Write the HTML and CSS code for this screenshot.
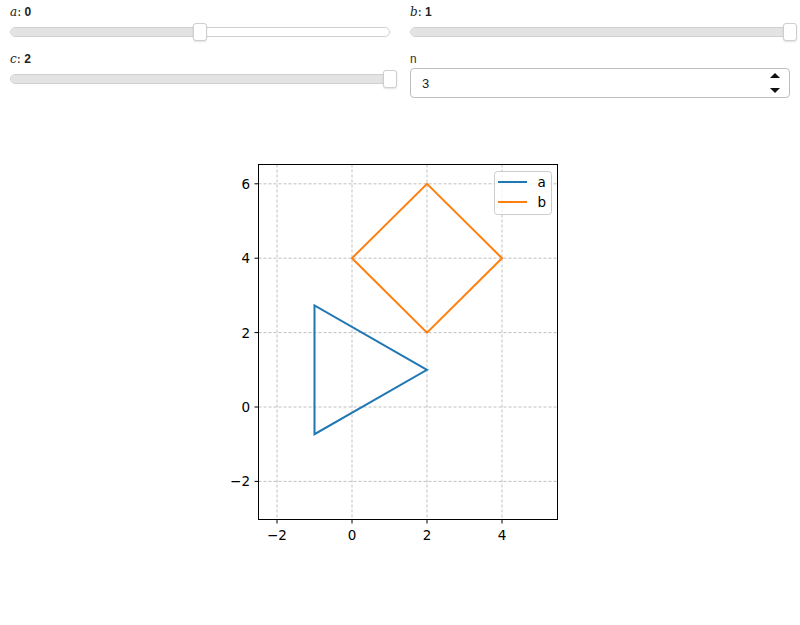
FILE: index.html
```html
<!DOCTYPE html>
<html>
<head>
<meta charset="utf-8">
<link rel="stylesheet" href="styles.css">
</head>
<body>
<div class="widgets">
  <div class="widget">
    <div class="label"><span class="math">a</span><span class="colon">:</span> <b>0</b></div>
    <div class="slider">
      <div class="track"><div class="fill" style="width:50%"></div></div>
      <div class="thumb" style="left:50%"></div>
    </div>
  </div>
  <div class="widget">
    <div class="label"><span class="math">b</span><span class="colon">:</span> <b>1</b></div>
    <div class="slider">
      <div class="track"><div class="fill" style="width:100%"></div></div>
      <div class="thumb" style="left:100%"></div>
    </div>
  </div>
  <div class="widget">
    <div class="label"><span class="math">c</span><span class="colon">:</span> <b>2</b></div>
    <div class="slider">
      <div class="track"><div class="fill" style="width:100%"></div></div>
      <div class="thumb" style="left:100%"></div>
    </div>
  </div>
  <div class="widget">
    <div class="label plain">n</div>
    <div class="number">
      <span class="num-value">3</span>
      <span class="spin">
        <svg width="10" height="20" viewBox="0 0 10 20"><path d="M0 5 L5 0 L10 5 Z" fill="#111"/><path d="M0 15 L10 15 L5 20 Z" fill="#111"/></svg>
      </span>
    </div>
  </div>
</div>
<div class="plot">
  <svg class="chart" width="360" height="420" viewBox="220 140 360 420">
    <g stroke="#b0b0b0" stroke-width="0.8" stroke-dasharray="3 2" fill="none">
      <line x1="277" y1="164.5" x2="277" y2="519.5"/>
      <line x1="352" y1="164.5" x2="352" y2="519.5"/>
      <line x1="427" y1="164.5" x2="427" y2="519.5"/>
      <line x1="502" y1="164.5" x2="502" y2="519.5"/>
      <line x1="258.5" y1="183.8" x2="557.5" y2="183.8"/>
      <line x1="258.5" y1="258.2" x2="557.5" y2="258.2"/>
      <line x1="258.5" y1="332.6" x2="557.5" y2="332.6"/>
      <line x1="258.5" y1="407" x2="557.5" y2="407"/>
      <line x1="258.5" y1="481.4" x2="557.5" y2="481.4"/>
    </g>
    <polygon points="427,369.8 314.5,305.4 314.5,434.2" fill="none" stroke="#1f77b4" stroke-width="2" stroke-linejoin="miter"/>
    <polygon points="502,258.2 427,183.8 352,258.2 427,332.6" fill="none" stroke="#ff7f0e" stroke-width="2"/>
    <rect x="258.5" y="164.5" width="299" height="355" fill="none" stroke="#000" stroke-width="1"/>
    <g stroke="#000" stroke-width="1">
      <line x1="277" y1="519.5" x2="277" y2="523.5"/>
      <line x1="352" y1="519.5" x2="352" y2="523.5"/>
      <line x1="427" y1="519.5" x2="427" y2="523.5"/>
      <line x1="502" y1="519.5" x2="502" y2="523.5"/>
      <line x1="254.5" y1="183.8" x2="258.5" y2="183.8"/>
      <line x1="254.5" y1="258.2" x2="258.5" y2="258.2"/>
      <line x1="254.5" y1="332.6" x2="258.5" y2="332.6"/>
      <line x1="254.5" y1="407" x2="258.5" y2="407"/>
      <line x1="254.5" y1="481.4" x2="258.5" y2="481.4"/>
    </g>
    <g class="tick" text-anchor="middle">
      <text x="277" y="540">−2</text>
      <text x="352" y="540">0</text>
      <text x="427" y="540">2</text>
      <text x="502" y="540">4</text>
    </g>
    <g class="tick" text-anchor="end">
      <text x="250" y="188.8">6</text>
      <text x="250" y="263.2">4</text>
      <text x="250" y="337.6">2</text>
      <text x="250" y="412">0</text>
      <text x="250" y="486.4">−2</text>
    </g>
    <rect x="494.5" y="171.5" width="57" height="43" rx="3" fill="#fff" fill-opacity="0.8" stroke="#cccccc" stroke-width="1"/>
    <line x1="498" y1="182" x2="527" y2="182" stroke="#1f77b4" stroke-width="2"/>
    <line x1="498" y1="202" x2="527" y2="202" stroke="#ff7f0e" stroke-width="2"/>
    <text class="tick" x="537.5" y="187">a</text>
    <text class="tick" x="537.5" y="207">b</text>
  </svg>
</div>
</body>
</html>
```
FILE: styles.css
```css
html, body {
  margin: 0;
  padding: 0;
  background: #fff;
}
body {
  width: 800px;
  font-family: "Liberation Sans", Arial, sans-serif;
  color: #333;
}
.widgets {
  display: grid;
  grid-template-columns: 380px 380px;
  column-gap: 20px;
  row-gap: 7px;
  padding: 3px 10px 0 10px;
  align-items: start;
}
.widget {
  display: flex;
  flex-direction: column;
}
.label {
  height: 18px;
  line-height: 18px;
  font-size: 12px;
  color: #222;
}
.label.plain {
  color: #333;
  font-family: Roboto, "Liberation Sans", sans-serif;
}
.math {
  font-family: "DejaVu Serif", "Liberation Serif", serif;
  font-style: italic;
  font-size: 12px;
}
.colon {
  font-family: "DejaVu Serif", serif;
  font-size: 12px;
}
.label b {
  font-weight: bold;
  font-size: 12px;
}
.slider {
  position: relative;
  height: 22px;
}
.track {
  position: absolute;
  left: 0;
  right: 0;
  top: 6px;
  height: 8px;
  border: 1px solid #d0d0d0;
  border-radius: 5px;
  background: #fff;
  overflow: hidden;
}
.fill {
  height: 100%;
  background: #e3e3e3;
}
.thumb {
  position: absolute;
  top: 2px;
  width: 14px;
  height: 18px;
  margin-left: -7px;
  box-sizing: border-box;
  background: #fff;
  border: 1px solid #cfcfcf;
  border-radius: 3px;
  box-shadow: 0 1px 2px rgba(0,0,0,0.12);
}
.number {
  height: 30px;
  box-sizing: border-box;
  border: 1px solid #bdbdbd;
  border-radius: 4px;
  display: flex;
  align-items: center;
  justify-content: space-between;
  padding: 0 9px 0 11px;
}
.num-value {
  font-size: 13px;
  color: #222;
}
.spin {
  display: flex;
  align-items: center;
}
.tick {
  font-family: "DejaVu Sans", sans-serif;
  font-size: 13.5px;
  fill: #000;
}
.plot {
  margin-top: 42px;
  padding-left: 220px;
}
.chart {
  display: block;
}
```
